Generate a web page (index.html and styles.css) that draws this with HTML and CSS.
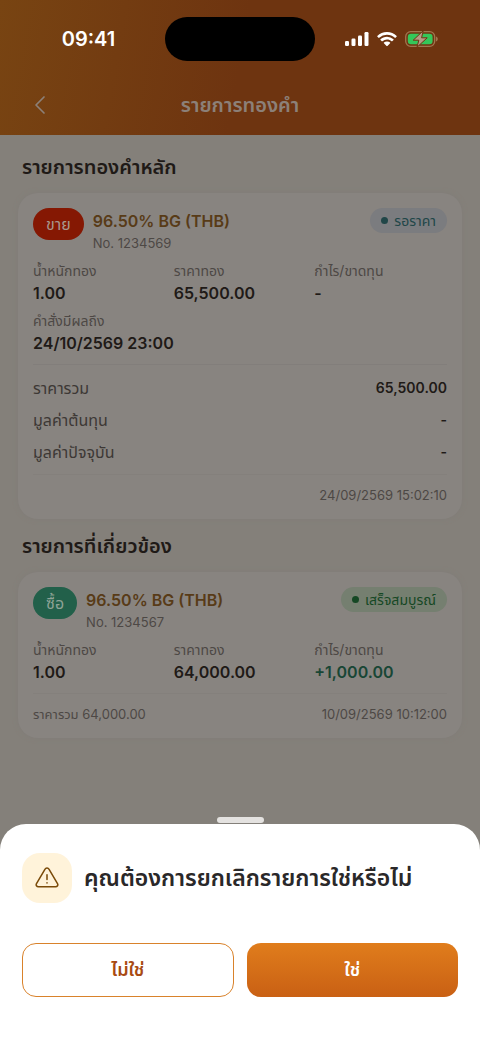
FILE: index.html
```html
<!DOCTYPE html>
<html lang="th">
<head>
<meta charset="utf-8">
<meta name="viewport" content="width=device-width, initial-scale=1">
<title>รายการทองคำ</title>
<link rel="stylesheet" href="styles.css">
</head>
<body>
<div class="screen">
  <header class="header">
    <div class="status">
      <span class="clock">09:41</span>
      <span class="island"></span>
      <span class="indicators">
        <svg width="24" height="16" viewBox="0 0 24 16" fill="#fff" aria-hidden="true">
          <rect x="0" y="10" width="4" height="5" rx="1.2"/><rect x="6.5" y="7.5" width="4" height="7.5" rx="1.2"/><rect x="13" y="4.5" width="4" height="10.5" rx="1.2"/><rect x="19.5" y="1" width="4" height="14" rx="1.2"/>
        </svg>
        <svg width="20" height="16" viewBox="0 0 20 16" fill="#fff" aria-hidden="true">
          <path d="M10 1C6.2 1 2.8 2.5.3 4.9c-.2.2-.2.5 0 .7l1.2 1.2c.2.2.5.2.7 0A11.300 11.300 0 0 1 10 3.800c3 0 5.700 1.100 7.800 3 .2.200.5.200.7 0l1.200-1.200c.2-.2.200-.5 0-.7A14 14 0 0 0 10 1z"/>
          <path d="M10 5.700c-2.500 0-4.800 1-6.500 2.500-.2.200-.2.500 0 .700l1.300 1.300c.2.200.5.200.7 0A6.700 6.700 0 0 1 10 8.500c1.700 0 3.300.6 4.500 1.700.2.200.5.200.7 0l1.300-1.300c.2-.2.200-.5 0-.700A9.700 9.700 0 0 0 10 5.700z"/>
          <path d="M10 10.400c-1.200 0-2.300.400-3.100 1.200-.2.200-.2.500 0 .700l2.700 2.700c.2.200.6.200.8 0l2.700-2.700c.2-.2.200-.5 0-.700-.8-.8-1.900-1.200-3.100-1.200z"/>
        </svg>
        <svg width="33" height="18" viewBox="0 0 33 18" aria-hidden="true">
          <rect x=".7" y="1.7" width="29" height="14.6" rx="5" fill="none" stroke="#a0764f" stroke-width="1.3"/>
          <path d="M31 6.500v5c1.200-.4 1.800-1.400 1.800-2.500S32.200 6.900 31 6.500z" fill="#a0764f"/>
          <rect x="2.800" y="3.800" width="24.800" height="10.400" rx="3.200" fill="#34c759"/>
          <path d="M18.200.8L8.200 10.200h5.600L12 17.200 22.200 7.800h-5.600z" fill="#b79a86" stroke="#6e3410" stroke-width="1" stroke-linejoin="round"/>
        </svg>
      </span>
    </div>
    <div class="navbar">
      <button class="back" type="button" aria-label="ย้อนกลับ">
        <svg width="12" height="20" viewBox="0 0 12 20" fill="none" stroke="currentColor" stroke-width="1.7" stroke-linecap="round" stroke-linejoin="round"><path d="M10 2L2 10l8 8"/></svg>
      </button>
      <h1 class="page-title">รายการทองคำ</h1>
      <span></span>
    </div>
  </header>

  <main class="content">
    <h2 class="section-title">รายการทองคำหลัก</h2>
    <article class="card">
      <div class="card-head">
        <span class="side side-sell">ขาย</span>
        <div class="product">
          <h3 class="product-name">96.50% BG (THB)</h3>
          <p class="order-no">No. 1234569</p>
        </div>
        <span class="state state-wait"><i class="dot"></i>รอราคา</span>
      </div>
      <dl class="facts">
        <div><dt>น้ำหนักทอง</dt><dd>1.00</dd></div>
        <div><dt>ราคาทอง</dt><dd>65,500.00</dd></div>
        <div><dt>กำไร/ขาดทุน</dt><dd>-</dd></div>
        <div class="wide"><dt>คำสั่งมีผลถึง</dt><dd>24/10/2569 23:00</dd></div>
      </dl>
      <dl class="totals">
        <div><dt>ราคารวม</dt><dd>65,500.00</dd></div>
        <div><dt>มูลค่าต้นทุน</dt><dd>-</dd></div>
        <div><dt>มูลค่าปัจจุบัน</dt><dd>-</dd></div>
      </dl>
      <div class="card-foot"><span></span><time>24/09/2569 15:02:10</time></div>
    </article>

    <h2 class="section-title">รายการที่เกี่ยวข้อง</h2>
    <article class="card">
      <div class="card-head">
        <span class="side side-buy">ซื้อ</span>
        <div class="product">
          <h3 class="product-name">96.50% BG (THB)</h3>
          <p class="order-no">No. 1234567</p>
        </div>
        <span class="state state-done"><i class="dot"></i>เสร็จสมบูรณ์</span>
      </div>
      <dl class="facts">
        <div><dt>น้ำหนักทอง</dt><dd>1.00</dd></div>
        <div><dt>ราคาทอง</dt><dd>64,000.00</dd></div>
        <div><dt>กำไร/ขาดทุน</dt><dd class="gain">+1,000.00</dd></div>
      </dl>
      <div class="card-foot"><span>ราคารวม 64,000.00</span><time>10/09/2569 10:12:00</time></div>
    </article>
  </main>

  <section class="sheet" role="dialog" aria-labelledby="ask">
    <span class="handle"></span>
    <div class="panel">
      <div class="question">
        <span class="warn">
          <svg width="24" height="24" viewBox="0 0 24 24" fill="none" stroke="#7a4a08" stroke-width="1.5" stroke-linecap="round" stroke-linejoin="round" aria-hidden="true">
            <path d="M9.900 3.300 1.500 17.600c-.9 1.500.2 3.200 1.900 3.200h17.200c1.700 0 2.800-1.700 1.900-3.200L14.100 3.300c-.9-1.600-3.300-1.600-4.200 0z"/>
            <path d="M12 8.800v4.700M12 16.700v.2"/>
          </svg>
        </span>
        <h2 class="ask" id="ask">คุณต้องการยกเลิกรายการใช่หรือไม่</h2>
      </div>
      <div class="actions">
        <button class="btn btn-no" type="button">ไม่ใช่</button>
        <button class="btn btn-yes" type="button">ใช่</button>
      </div>
    </div>
  </section>
</div>
</body>
</html>
```
FILE: styles.css
```css
* { box-sizing: border-box; }
body, h1, h2, h3, p, dl, dd { margin: 0; }
body {
  font-family: Inter, "Noto Sans Thai", "Noto Sans", sans-serif;
  color: #1f1a17;
  background: #84807a;
}
button { font: inherit; border: 0; background: none; cursor: pointer; }
svg { display: block; }

.screen {
  min-height: 100vh;
  display: flex;
  flex-direction: column;
}

.header { background: linear-gradient(100deg, #784412 0%, #6e3410 50%, #6e3410 100%); }
.status {
  display: grid;
  grid-template-columns: 1fr 150px 1fr;
  align-items: center;
  height: 78px;
  color: #fff;
}
.clock { justify-self: center; padding-left: 12px; font-size: 20px; font-weight: 600; }
.island { height: 44px; border-radius: 22px; background: #000; }
.indicators { display: flex; align-items: center; justify-content: center; gap: 8px; padding-right: 12px; }
.navbar {
  display: grid;
  grid-template-columns: 48px 1fr 48px;
  align-items: center;
  height: 57px;
  padding: 0 16px 3px;
  color: #8c8078;
}
.back { display: grid; place-items: center; height: 44px; padding: 0; color: inherit; }
.page-title { text-align: center; font-size: 20px; line-height: 28px; font-weight: 600; }

.content { flex: 1; padding: 18px 18px 0; }
.section-title { padding-left: 4px; font-size: 20px; line-height: 28px; font-weight: 600; }
.card {
  margin: 12px 0 13px;
  padding: 15px 15px 13px;
  border-radius: 20px;
  background: #888480;
  box-shadow: 0 0 5px #807c78;
}
.card-head { display: flex; align-items: flex-start; gap: 9px; margin-bottom: 6px; }
.side {
  height: 32px;
  padding: 0 13px;
  border-radius: 16px;
  font-size: 16px;
  line-height: 32px;
  color: #a8978e;
}
.side-sell { background: #851803; }
.side-buy { background: #22604a; color: #8ea396; }
.product { flex: 1; padding-top: 2px; }
.product-name { font-size: 16px; line-height: 22px; font-weight: 600; color: #583b17; }
.order-no { font-size: 13px; line-height: 22px; color: #4d4845; }
.state {
  display: flex;
  align-items: center;
  gap: 6px;
  padding: 0 11px;
  border-radius: 13px;
  font-size: 14px;
  line-height: 25px;
}
.dot { width: 7px; height: 7px; border-radius: 50%; background: currentColor; }
.state-wait { background: #7b7c7f; color: #204648; }
.state-done { background: #757f70; color: #154824; }

.facts { display: grid; grid-template-columns: repeat(3, minmax(0, 1fr)); row-gap: 6px; column-gap: 8px; }
.wide { grid-column: 1 / -1; }
.facts dt { font-size: 14px; line-height: 22px; color: #4d4845; }
.facts dd { font-size: 16px; line-height: 22px; font-weight: 600; }
.facts .gain { color: #184635; }
.totals { margin-top: 10px; padding: 7px 0 6px; border-top: 1px solid #827e7b; }
.totals div { display: flex; justify-content: space-between; line-height: 32px; }
.totals dt { font-size: 16px; color: #3d3835; }
.totals dd { font-size: 14px; font-weight: 600; }
.card-foot {
  display: flex;
  justify-content: space-between;
  padding-top: 9px;
  border-top: 1px solid #84807c;
  font-size: 13px;
  line-height: 22px;
  color: #4d4845;
}
.facts + .card-foot { margin-top: 10px; }

.sheet { display: flex; flex-direction: column; align-items: center; gap: 1px; }
.handle { width: 47px; height: 6px; border-radius: 3px; background: #e4e2e0; }
.panel {
  align-self: stretch;
  padding: 29px 22px 47px;
  border-radius: 26px 26px 0 0;
  background: #fff;
}
.question { display: flex; align-items: center; gap: 12px; margin-bottom: 40px; }
.warn {
  display: grid;
  place-items: center;
  width: 50px;
  height: 50px;
  border-radius: 18px;
  background: #fff3da;
}
.ask { font-size: 23px; line-height: 32px; font-weight: 600; color: #2a2829; }
.actions { display: grid; grid-template-columns: 1fr 1fr; gap: 13px; }
.btn { height: 54px; border-radius: 14px; font-size: 18px; font-weight: 600; }
.btn-no { border: 1px solid #d9822b; color: #a84a12; background: #fff; }
.btn-yes { color: #fff; background: linear-gradient(#e07d1c, #c96014); }
```
